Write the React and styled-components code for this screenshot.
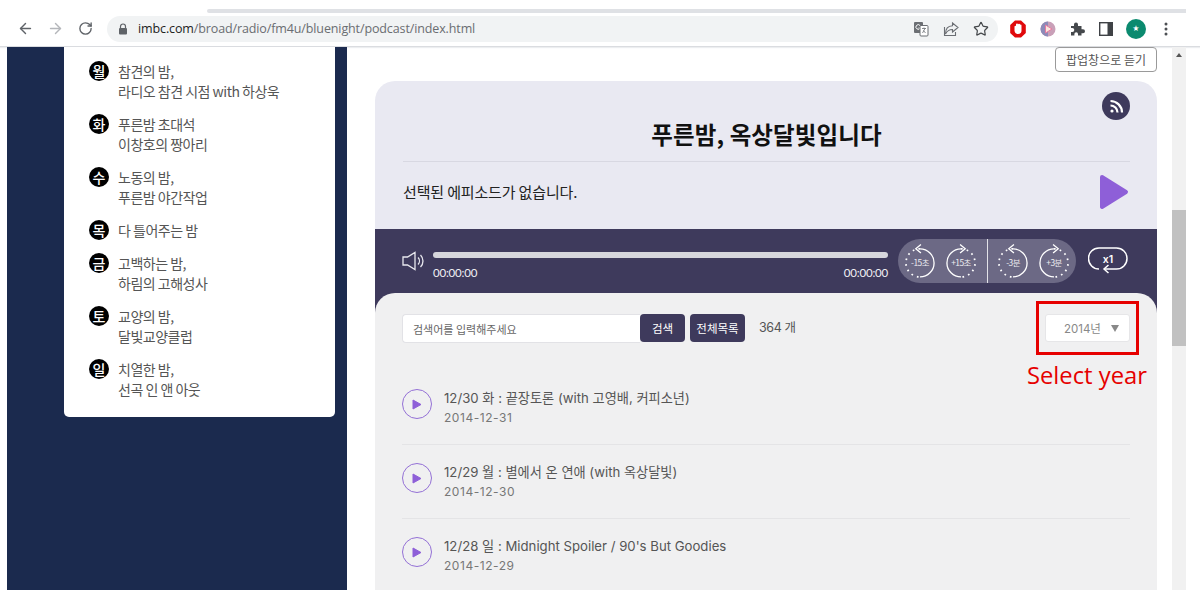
import React from 'react';
import styled, { createGlobalStyle } from 'styled-components';
import { ArrowLeft, ArrowRight, RotateCw, Star } from 'lucide-react';

const GlobalStyle = createGlobalStyle`
  html, body {
    margin: 0;
    height: 100%;
    background: #fff;
    overflow: hidden;
  }
  * { box-sizing: border-box; }
  body {
    font-family: Inter, "Noto Sans CJK KR", "Liberation Sans", sans-serif;
  }
`;

const days = [
  { day: '월', lines: ['참견의 밤,', '라디오 참견 시점 with 하상욱'] },
  { day: '화', lines: ['푸른밤 초대석', '이창호의 짱아리'] },
  { day: '수', lines: ['노동의 밤,', '푸른밤 야간작업'] },
  { day: '목', lines: ['다 틀어주는 밤'] },
  { day: '금', lines: ['고백하는 밤,', '하림의 고해성사'] },
  { day: '토', lines: ['교양의 밤,', '달빛교양클럽'] },
  { day: '일', lines: ['치열한 밤,', '선곡 인 앤 아웃'] },
];

const episodes = [
  { title: '12/30 화 : 끝장토론 (with 고영배, 커피소년)', date: '2014-12-31' },
  { title: '12/29 월 : 별에서 온 연애 (with 옥상달빛)', date: '2014-12-30' },
  { title: "12/28 일 : Midnight Spoiler / 90's But Goodies", date: '2014-12-29' },
];

const SeekIcon = ({ label, forward }) => (
  <SeekSvg viewBox="0 0 32 36">
    <path
      d={forward ? 'M16 5 A15 15 0 0 0 16 35' : 'M16 5 A15 15 0 0 1 16 35'}
      fill="none"
      stroke="#fff"
      strokeWidth="1.4"
    />
    <path
      d={forward ? 'M16 5 A15 15 0 0 1 16 35' : 'M16 5 A15 15 0 0 0 16 35'}
      fill="none"
      stroke="#fff"
      strokeWidth="1.9"
      strokeDasharray="1.8 4.4"
    />
    <path
      d={forward ? 'M15 0.5 L20.5 5 L15 9.5' : 'M17 0.5 L11.5 5 L17 9.5'}
      fill="none"
      stroke="#fff"
      strokeWidth="1.4"
    />
    <text x="16" y="23.5" textAnchor="middle" fontSize="9" fill="#eeeef2" letterSpacing="-0.6">
      {label}
    </text>
  </SeekSvg>
);

const App = () => (
  <>
    <GlobalStyle />
    <TabStrip>
      <TabBar />
    </TabStrip>
    <Toolbar>
      <NavIcon><ArrowLeft size={17} color="#5f6368" /></NavIcon>
      <NavIcon><ArrowRight size={17} color="#b4b6ba" /></NavIcon>
      <NavIcon><RotateCw size={15} color="#5f6368" strokeWidth={2.2} /></NavIcon>
      <Omnibox>
        <svg width="10" height="12" viewBox="0 0 10 12">
          <path d="M2.5 5V3.5a2.5 2.5 0 0 1 5 0V5" fill="none" stroke="#5f6368" strokeWidth="1.2" />
          <rect x="1" y="5" width="8" height="6.5" rx="1" fill="#5f6368" />
        </svg>
        <Url><b>imbc.com</b>/broad/radio/fm4u/bluenight/podcast/index.html</Url>
        <OmniIcons>
          <svg width="16" height="16" viewBox="0 0 16 16">
            <rect x="1" y="1" width="9" height="11" rx="1" fill="#6b6e73" />
            <path d="M7 4.5a2.300 2.300 0 1 0 .3 2.500H5.500" fill="none" stroke="#fff" strokeWidth="1" />
            <rect x="7" y="4.500" width="8" height="10.500" rx="1" fill="#fff" stroke="#6b6e73" />
            <path d="M9 7.500h4M11 6.500v1M9.500 12l2.500-4.500M12.500 12l-2-2.500" stroke="#6b6e73" strokeWidth="0.8" fill="none" />
          </svg>
          <svg width="16" height="16" viewBox="0 0 16 16" fill="none" stroke="#6b6e73" strokeWidth="1.1">
            <path d="M9.500 2 15 6.500 9.500 11V8.500C6 8.500 4 10 2.500 13c0-5 2.500-8 7-8.200z" />
            <path d="M1.500 6v8.500h11V11" />
          </svg>
          <Star size={16} color="#44474a" strokeWidth={1.8} />
        </OmniIcons>
      </Omnibox>
      <Extensions>
        <svg width="16" height="18" viewBox="0 0 16 18">
          <path d="M5 .5h6L15.800 5v8L11 17.500H5L.2 13V5z" fill="#e0090b" />
          <path d="M4.500 6.500a1 1 0 0 1 1.500-.5V4.500a1 1 0 0 1 2 0 1 1 0 0 1 2 .3 1 1 0 0 1 1.500.7v5c0 2-1 3.500-3.500 3.500-2 0-3-1-3.500-3z" fill="#fff" />
        </svg>
        <svg width="16" height="16" viewBox="0 0 16 16">
          <circle cx="8" cy="8" r="7.500" fill="#c9a0b8" />
          <path d="M0.500 8a7.500 7.500 0 0 1 7.500-7.500v15A7.500 7.500 0 0 1 .5 8z" fill="#8d8ab8" />
          <path d="M5.500 4 12 8l-6.500 4z" fill="#fbe6dd" stroke="#e87aa0" />
        </svg>
        <svg width="15" height="15" viewBox="0 0 15 15">
          <path
            d="M1 5h3V3.500a2 2 0 0 1 4 0V5h3.500v3.200H13a2 2 0 0 1 0 4h-1.500V14.500H8V13a1.800 1.800 0 0 0-3.600 0v1.500H1v-3.500h1.300a2 2 0 0 0 0-4H1z"
            fill="#45484c"
          />
        </svg>
        <svg width="14" height="14" viewBox="0 0 14 14">
          <rect x="0.700" y="0.700" width="12.600" height="12.600" fill="#fff" stroke="#3f4246" strokeWidth="1.400" />
          <rect x="8.500" y="1" width="4.500" height="12" fill="#3f4246" />
        </svg>
        <Avatar>★</Avatar>
        <MenuDots width="4" height="14" viewBox="0 0 4 14" fill="#4c4f53">
          <circle cx="2" cy="2" r="1.500" />
          <circle cx="2" cy="7" r="1.500" />
          <circle cx="2" cy="12" r="1.500" />
        </MenuDots>
      </Extensions>
    </Toolbar>

    <Viewport>
      <Sidebar>
        <ScheduleCard>
          {days.map(item => (
            <ScheduleRow key={item.day}>
              <DayBadge>{item.day}</DayBadge>
              <ScheduleText>
                {item.lines.map(line => <div key={line}>{line}</div>)}
              </ScheduleText>
            </ScheduleRow>
          ))}
        </ScheduleCard>
      </Sidebar>

      <Main>
        <PopupRow>
          <PopupButton>팝업창으로 듣기</PopupButton>
        </PopupRow>
        <Panel>
          <Header>
            <RssButton>
              <svg width="15" height="15" viewBox="0 0 15 15" fill="none" stroke="#fff" strokeWidth="2.200">
                <circle cx="3" cy="12" r="1.600" fill="#fff" stroke="none" />
                <path d="M1.500 6.500a7 7 0 0 1 7 7" />
                <path d="M1.500 2a11.500 11.500 0 0 1 11.500 11.500" />
              </svg>
            </RssButton>
            <Title>푸른밤, 옥상달빛입니다</Title>
            <NowPlaying>
              <span>선택된 에피소드가 없습니다.</span>
              <svg width="30" height="36" viewBox="0 0 30 36">
                <path d="M3 3 L27 18 L3 33 Z" fill="#8e5fd8" stroke="#8e5fd8" strokeWidth="4" strokeLinejoin="round" />
              </svg>
            </NowPlaying>
          </Header>

          <PlayerShell>
            <Player>
              <VolumeIcon viewBox="0 0 23 20" fill="none" stroke="#e8e8ee" strokeWidth="1.300">
                <path d="M1 6h4.500L13 1.500v17L5.500 14H1z" />
                <path d="M16 6.500a5 5 0 0 1 0 7M18.500 4a8.500 8.500 0 0 1 0 12" />
              </VolumeIcon>
              <Progress>
                <ProgressTrack />
                <Times>
                  <span>00:00:00</span>
                  <span>00:00:00</span>
                </Times>
              </Progress>
              <SeekPill>
                <SeekGroup>
                  <SeekIcon label="-15초" />
                  <SeekIcon label="+15초" forward />
                </SeekGroup>
                <SeekGroup>
                  <SeekIcon label="-3분" />
                  <SeekIcon label="+3분" forward />
                </SeekGroup>
              </SeekPill>
              <SpeedButton>
                <svg width="40" height="29" viewBox="0 0 40 29" fill="none" stroke="#fff" strokeWidth="1.500">
                  <path d="M11 24 A10.500 10.500 0 0 1 11 3 H28.500 A10.500 10.500 0 0 1 28.500 24 H16" />
                  <path d="M20.500 20 16 24l4.500 4" />
                  <text x="20" y="17.500" textAnchor="middle" fontSize="10.500" fontWeight="600" fill="#fff" stroke="none">x1</text>
                </svg>
              </SpeedButton>
            </Player>

            <ListArea>
              <SearchBar>
                <SearchInput placeholder="검색어를 입력해주세요" readOnly />
                <SearchButton>검색</SearchButton>
                <AllButton>전체목록</AllButton>
                <Count>364 개</Count>
                <YearSelect>
                  2014년
                  <Caret />
                </YearSelect>
              </SearchBar>

              {episodes.map(episode => (
                <EpisodeRow key={episode.date}>
                  <EpisodePlay>
                    <svg width="10" height="11" viewBox="0 0 10 11">
                      <path d="M1 1 9 5.500 1 10z" fill="#8e5fd8" stroke="#8e5fd8" strokeLinejoin="round" />
                    </svg>
                  </EpisodePlay>
                  <div>
                    <EpisodeTitle>{episode.title}</EpisodeTitle>
                    <EpisodeDate>{episode.date}</EpisodeDate>
                  </div>
                </EpisodeRow>
              ))}

              <RedBox />
              <RedLabel>Select year</RedLabel>
            </ListArea>
          </PlayerShell>
        </Panel>
      </Main>

      <Scrollbar>
        <ScrollArrow />
        <ScrollThumb />
      </Scrollbar>
    </Viewport>
  </>
);

const TabStrip = styled.div`
  height: 16px;
  padding: 9px 14px 0 207px;
`;

const TabBar = styled.div`
  height: 4px;
  background: #dfe1e5;
  border-radius: 2px 0 0 2px;
`;

const Toolbar = styled.div`
  height: 31px;
  padding: 0 14px 5px 11px;
  display: flex;
  align-items: center;
  border-bottom: 1px solid #dadce0;
  box-shadow: 0 1px 1px #eceef0;
`;

const NavIcon = styled.div`
  width: 28px;
  margin-right: 2px;
  display: flex;
  justify-content: center;
`;

const Omnibox = styled.div`
  width: 891px;
  height: 26px;
  margin-left: 6px;
  padding: 0 8px 0 11px;
  background: #f1f3f4;
  border-radius: 13px;
  display: flex;
  align-items: center;
`;

const Url = styled.div`
  margin-left: 10px;
  font-family: "Open Sans", "Liberation Sans", sans-serif;
  font-size: 12.5px;
  letter-spacing: -0.12px;
  color: #6a6d71;
  flex: 1;

  b {
    font-weight: 400;
    color: #222;
  }
`;

const OmniIcons = styled.div`
  display: flex;
  align-items: center;
  gap: 14px;
  margin-right: 1px;
`;

const Extensions = styled.div`
  margin-left: 12px;
  display: flex;
  align-items: center;
  gap: 14px;
`;

const Avatar = styled.div`
  width: 20px;
  height: 20px;
  margin: 0 -2px 0 -1px;
  border-radius: 50%;
  background: #0b8a6f;
  color: #fff;
  font-size: 7px;
  display: flex;
  align-items: center;
  justify-content: center;
`;

const MenuDots = styled.svg`
  margin-left: 6px;
`;

const Viewport = styled.div`
  height: 543px;
  display: flex;
  overflow: hidden;
`;

const Sidebar = styled.aside`
  width: 340px;
  margin-left: 7px;
  padding-left: 57px;
  background: #1b2a4e;
  flex-shrink: 0;
`;

const ScheduleCard = styled.div`
  width: 271px;
  height: 370px;
  padding: 13.500px 0 0 25px;
  background: #fff;
  border-radius: 0 0 5px 5px;
`;

const ScheduleRow = styled.div`
  display: flex;
  gap: 9px;
  margin-bottom: 13px;
`;

const DayBadge = styled.div`
  width: 20px;
  height: 20px;
  border-radius: 50%;
  background: #000;
  color: #fff;
  font-family: "Noto Sans CJK KR", sans-serif;
  font-size: 14px;
  font-weight: 500;
  display: flex;
  align-items: center;
  justify-content: center;
  flex-shrink: 0;
`;

const ScheduleText = styled.div`
  font-family: "Noto Sans CJK KR", sans-serif;
  font-size: 14px;
  line-height: 20px;
  letter-spacing: -0.5px;
  color: #555;
`;

const Main = styled.main`
  width: 782px;
  margin-left: 28px;
  flex-shrink: 0;
`;

const PopupRow = styled.div`
  height: 34px;
  display: flex;
  justify-content: flex-end;
`;

const PopupButton = styled.div`
  width: 102px;
  height: 25px;
  border: 1px solid #9a9a9a;
  border-radius: 4px;
  font-family: "Noto Sans CJK KR", sans-serif;
  font-size: 12px;
  color: #555;
  display: flex;
  align-items: center;
  justify-content: center;
`;

const Panel = styled.section`
  border-radius: 20px 20px 0 0;
  overflow: hidden;
`;

const Header = styled.div`
  position: relative;
  height: 148px;
  padding: 0 27px 0 28px;
  background: #e9e9f2;
`;

const RssButton = styled.div`
  position: absolute;
  top: 11px;
  right: 27px;
  width: 28px;
  height: 28px;
  border-radius: 50%;
  background: #3e3a5c;
  display: flex;
  align-items: center;
  justify-content: center;
`;

const Title = styled.h1`
  margin: 0;
  height: 81px;
  padding-top: 37px;
  border-bottom: 1px solid #d8d8e2;
  font-family: "Noto Sans CJK KR", sans-serif;
  font-size: 23.500px;
  line-height: 32px;
  font-weight: 700;
  letter-spacing: 0.1px;
  text-align: center;
  color: #111;
`;

const NowPlaying = styled.div`
  height: 60px;
  padding-bottom: 1px;
  display: flex;
  align-items: center;
  justify-content: space-between;
  font-family: "Noto Sans CJK KR", sans-serif;
  font-size: 15px;
  letter-spacing: -0.15px;
  color: #222;

  svg {
    margin-top: 1px;
    margin-right: 1px;
  }
`;

const PlayerShell = styled.div`
  background: #3e3a5c;
`;

const Player = styled.div`
  height: 64px;
  padding: 10px 0 0 27px;
  display: flex;
  align-items: flex-start;
`;

const VolumeIcon = styled.svg`
  width: 23px;
  height: 20px;
  margin-top: 12px;
  flex-shrink: 0;
`;

const Progress = styled.div`
  width: 455px;
  margin: 13px 0 0 8px;
`;

const ProgressTrack = styled.div`
  height: 6px;
  border-radius: 3px;
  background: #d6d6dc;
`;

const Times = styled.div`
  margin-top: 8px;
  display: flex;
  justify-content: space-between;
  font-family: Lato, sans-serif;
  font-size: 11.500px;
  letter-spacing: -0.2px;
  color: #f0f0f4;
`;

const SeekPill = styled.div`
  width: 178px;
  height: 44px;
  margin-left: 10px;
  border-radius: 22px;
  background: #6c6985;
  display: flex;
`;

const SeekGroup = styled.div`
  width: 89px;
  padding: 0 0 0 7px;
  display: flex;
  align-items: center;
  gap: 11px;

  & + & {
    border-left: 1px solid #e2e2e8;
    padding-left: 10px;
  }
`;

const SeekSvg = styled.svg`
  width: 30px;
  height: 34px;
  flex-shrink: 0;
  font-family: "Noto Sans CJK KR", sans-serif;
`;

const SpeedButton = styled.div`
  margin: 6px 0 0 12px;
`;

const ListArea = styled.div`
  position: relative;
  height: 300px;
  padding: 0 27px 0 27px;
  background: #f0f0f1;
  border-radius: 20px 20px 0 0;
`;

const SearchBar = styled.div`
  height: 78px;
  padding-top: 21px;
  display: flex;
  align-items: flex-start;
`;

const SearchInput = styled.input`
  width: 238px;
  height: 29px;
  padding: 0 10px;
  border: 1px solid #e2e2e6;
  border-right: 0;
  border-radius: 4px 0 0 4px;
  background: #fff;
  outline: none;
  font-family: "Noto Sans CJK KR", sans-serif;
  font-size: 11px;

  &::placeholder {
    color: #666;
  }
`;

const SearchButton = styled.div`
  width: 45px;
  height: 28px;
  border-radius: 4px;
  background: #3e3a5c;
  color: #fff;
  font-family: "Noto Sans CJK KR", sans-serif;
  font-size: 11.500px;
  display: flex;
  align-items: center;
  justify-content: center;
`;

const AllButton = styled(SearchButton)`
  width: 55px;
  margin-left: 5px;
`;

const Count = styled.div`
  margin-left: 14px;
  line-height: 28px;
  font-size: 12.500px;
  letter-spacing: -0.4px;
  color: #555;
`;

const YearSelect = styled.div`
  width: 85px;
  height: 28px;
  margin-left: auto;
  padding-left: 18px;
  border: 1px solid #e6e6e8;
  border-radius: 3px;
  background: #fff;
  color: #888;
  font-size: 11.500px;
  display: flex;
  align-items: center;
`;

const Caret = styled.span`
  margin-left: 10px;
  border-top: 7px solid #888;
  border-left: 4px solid transparent;
  border-right: 4px solid transparent;
`;

const EpisodeRow = styled.div`
  height: 74px;
  padding-top: 18px;
  display: flex;
  gap: 12px;
  border-bottom: 1px solid #e4e4e6;
`;

const EpisodePlay = styled.div`
  width: 30px;
  height: 30px;
  border: 1.500px solid #9470d6;
  border-radius: 50%;
  display: flex;
  align-items: center;
  justify-content: center;
  flex-shrink: 0;
`;

const EpisodeTitle = styled.div`
  font-size: 13.200px;
  line-height: 18px;
  color: #555;
`;

const EpisodeDate = styled.div`
  margin-top: 3px;
  font-size: 12px;
  line-height: 16px;
  letter-spacing: 0.55px;
  color: #777;
`;

const RedBox = styled.div`
  position: absolute;
  top: 8px;
  right: 18px;
  width: 103px;
  height: 54px;
  border: 3.500px solid #e60000;
`;

const RedLabel = styled.div`
  position: absolute;
  top: 67px;
  right: 10px;
  font-family: "Open Sans", sans-serif;
  font-size: 23.800px;
  line-height: 30px;
  color: #e60000;
`;

const Scrollbar = styled.div`
  width: 14px;
  margin-left: 15px;
  background: #f1f1f1;
  flex-shrink: 0;
`;

const ScrollArrow = styled.div`
  width: 0;
  margin: 6px auto 0;
  border-bottom: 4px solid #555;
  border-left: 3.500px solid transparent;
  border-right: 3.500px solid transparent;
`;

const ScrollThumb = styled.div`
  height: 136px;
  margin-top: 153px;
  background: #c1c1c1;
`;

export default App;
